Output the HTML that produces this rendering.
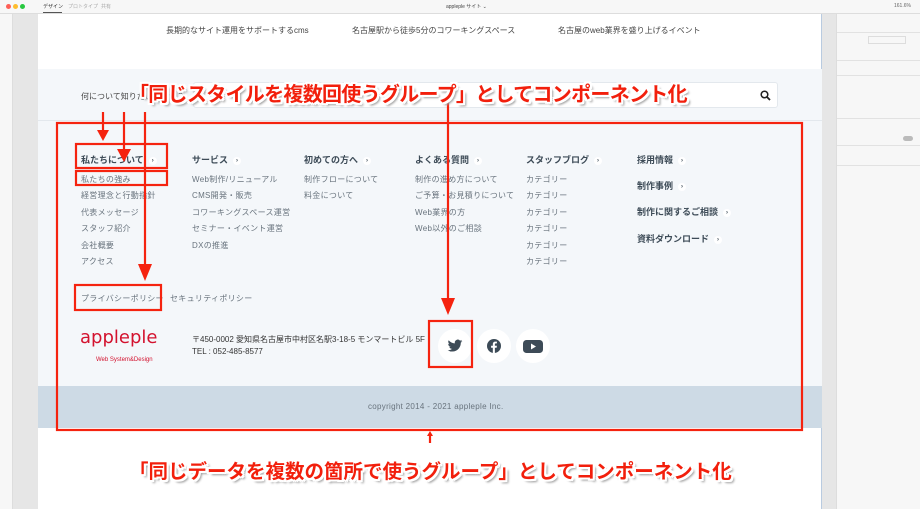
<!DOCTYPE html>
<html><head><meta charset="utf-8">
<style>
*{margin:0;padding:0;box-sizing:border-box}
body{width:920px;height:509px;overflow:hidden;background:#e6e6e6;font-family:"Liberation Sans","Noto Sans CJK JP",sans-serif;position:relative;color:#3d4b57}
.a{position:absolute;white-space:nowrap}
.top{left:0;top:0;width:920px;height:14px;background:#f7f7f7;border-bottom:1px solid #ddd}
.left{left:0;top:14px;width:13px;height:495px;background:#f7f7f7;border-right:1px solid #ddd}
.right{left:836px;top:14px;width:84px;height:495px;background:#f7f7f7;border-left:1px solid #ddd}
.art{left:38px;top:14px;width:784px;height:495px;background:#fff;border-right:1px solid #b9cbe0}
.h{font-size:9px;font-weight:bold;color:#3d4b57}
.h i{display:inline-block;width:8px;height:8px;border-radius:50%;background:#fff;font-style:normal;font-size:6px;text-align:center;line-height:8px;margin-left:5px;vertical-align:1px}
.it{font-size:8px;color:#68737d;line-height:16.4px;letter-spacing:.3px}
.t{font-size:7px;color:#444}
.c{width:34px;height:34px;border-radius:50%;background:#fff;top:329px}
.ann{font-weight:bold;color:#f21f0c;text-shadow:2px 2px 0 #fff,-2px -2px 0 #fff,2px -2px 0 #fff,-2px 2px 0 #fff,0 2px 0 #fff,2px 0 0 #fff,0 -2px 0 #fff,-2px 0 0 #fff,3px 3px 2px #999}
.sep{position:absolute;left:837px;width:83px;height:1px;background:#e2e2e2}
</style></head><body>
<div class="a top"></div>
<div class="a" style="left:6px;top:4px;width:5px;height:5px;border-radius:50%;background:#fe5f57"></div>
<div class="a" style="left:13px;top:4px;width:5px;height:5px;border-radius:50%;background:#febc2e"></div>
<div class="a" style="left:20px;top:4px;width:5px;height:5px;border-radius:50%;background:#28c840"></div>
<div class="a t" style="left:43px;top:3px;font-size:5px;color:#333">デザイン</div>
<div class="a" style="left:43px;top:12px;width:19px;height:1px;background:#555"></div>
<div class="a t" style="left:68px;top:3px;font-size:5px;color:#aaa">プロトタイプ</div>
<div class="a t" style="left:101px;top:3px;font-size:5px;color:#aaa">共有</div>
<div class="a t" style="left:446px;top:3px;font-size:5px;color:#444">appleple サイト ⌄</div>
<div class="a t" style="left:894px;top:3px;font-size:5px;color:#666">161.6%</div>
<div class="a left"></div>
<div class="a right"></div>
<div class="sep" style="top:32px"></div><div class="sep" style="top:60px"></div><div class="sep" style="top:75px"></div><div class="sep" style="top:118px"></div><div class="sep" style="top:145px"></div><div class="sep" style="top:165px"></div>
<div class="a" style="left:868px;top:36px;width:38px;height:8px;border:1px solid #ddd"></div>
<div class="a" style="left:903px;top:136px;width:10px;height:5px;border-radius:3px;background:#bbb"></div>
<div class="a art"></div>
<div class="a t" style="left:166px;top:25px;font-size:8px">長期的なサイト運用をサポートするcms</div>
<div class="a t" style="left:352px;top:25px;font-size:8px">名古屋駅から徒歩5分のコワーキングスペース</div>
<div class="a t" style="left:558px;top:25px;font-size:8px">名古屋のweb業界を盛り上げるイベント</div>
<div class="a" style="left:38px;top:69px;width:784px;height:317px;background:#f4f7fa"></div>
<div class="a t" style="left:81px;top:91px;font-size:8px">何について知りたいですか？</div>
<div class="a" style="left:193px;top:82px;width:585px;height:26px;background:#fff;border:1px solid #e3e8ed;border-radius:3px"></div>
<svg class="a" style="left:760px;top:90px" width="11" height="11" viewBox="0 0 11 11"><circle cx="4.5" cy="4.5" r="3.3" fill="none" stroke="#222" stroke-width="1.5"/><line x1="7" y1="7" x2="10" y2="10" stroke="#222" stroke-width="1.8"/></svg>
<div class="a" style="left:38px;top:120px;width:784px;height:1px;background:#e3e8ed"></div>

<div class="a h" style="left:81px;top:153px">私たちについて<i>›</i></div>
<div class="a it" style="left:81px;top:172px">私たちの強み<br>経営理念と行動指針<br>代表メッセージ<br>スタッフ紹介<br>会社概要<br>アクセス</div>
<div class="a h" style="left:192px;top:153px">サービス<i>›</i></div>
<div class="a it" style="left:192px;top:172px">Web制作/リニューアル<br>CMS開発・販売<br>コワーキングスペース運営<br>セミナー・イベント運営<br>DXの推進</div>
<div class="a h" style="left:304px;top:153px">初めての方へ<i>›</i></div>
<div class="a it" style="left:304px;top:172px">制作フローについて<br>料金について</div>
<div class="a h" style="left:415px;top:153px">よくある質問<i>›</i></div>
<div class="a it" style="left:415px;top:172px">制作の進め方について<br>ご予算・お見積りについて<br>Web業界の方<br>Web以外のご相談</div>
<div class="a h" style="left:526px;top:153px">スタッフブログ<i>›</i></div>
<div class="a it" style="left:526px;top:172px">カテゴリー<br>カテゴリー<br>カテゴリー<br>カテゴリー<br>カテゴリー<br>カテゴリー</div>
<div class="a h" style="left:637px;top:153px">採用情報<i>›</i></div>
<div class="a h" style="left:637px;top:179px">制作事例<i>›</i></div>
<div class="a h" style="left:637px;top:205px">制作に関するご相談<i>›</i></div>
<div class="a h" style="left:637px;top:232px">資料ダウンロード<i>›</i></div>
<div class="a it" style="left:81px;top:291px">プライバシーポリシー</div>
<div class="a it" style="left:170px;top:291px">セキュリティポリシー</div>

<div class="a" style="left:80px;top:327px;font-size:18px;color:#d3122e;letter-spacing:0;font-family:'DejaVu Sans',sans-serif">appleple</div>
<div class="a" style="left:96px;top:357px;font-size:6px;color:#d3122e">Web System&amp;Design</div>
<div class="a t" style="left:192px;top:334px;font-size:8px;color:#333">〒450-0002 愛知県名古屋市中村区名駅3-18-5 モンマートビル 5F</div>
<div class="a t" style="left:192px;top:347px;font-size:8px;color:#333">TEL : 052-485-8577</div>
<div class="a c" style="left:438px"></div>
<div class="a c" style="left:477px"></div>
<div class="a c" style="left:516px"></div>
<svg class="a" style="left:447px;top:338px" width="16" height="16" viewBox="0 0 24 24"><path fill="#3d4b57" d="M23 4.6a9 9 0 0 1-2.6.7 4.6 4.6 0 0 0 2-2.5 9 9 0 0 1-2.9 1.1 4.5 4.5 0 0 0-7.7 4.1A12.8 12.8 0 0 1 2.5 3.3a4.5 4.5 0 0 0 1.4 6 4.5 4.5 0 0 1-2-.6v.1a4.5 4.5 0 0 0 3.6 4.4 4.5 4.5 0 0 1-2 .1 4.5 4.5 0 0 0 4.2 3.1A9 9 0 0 1 1 18.3a12.8 12.8 0 0 0 6.9 2c8.3 0 12.8-6.9 12.8-12.8v-.6A9 9 0 0 0 23 4.6z"/></svg>
<svg class="a" style="left:487px;top:339px" width="14" height="14" viewBox="0 0 24 24"><circle cx="12" cy="12" r="12" fill="#3d4b57"/><path fill="#fff" d="M13.5 24v-9h3l.5-3.5h-3.5V9.3c0-1 .3-1.7 1.8-1.7H17V4.5c-.3 0-1.4-.1-2.6-.1-2.6 0-4.4 1.6-4.4 4.5v2.6H7V15h3v9z"/></svg>
<svg class="a" style="left:523px;top:340px" width="20" height="13" viewBox="0 0 20 13"><rect width="20" height="13" rx="3.5" fill="#3d4b57"/><path d="M8 3.5v6l5-3z" fill="#fff"/></svg>

<div class="a" style="left:38px;top:386px;width:784px;height:42px;background:#cddae5"></div>
<div class="a it" style="left:368px;top:399px">copyright 2014 - 2021 appleple Inc.</div>

<svg class="a" style="left:0;top:0" width="920" height="509">
<g fill="none" stroke="#f5230f" stroke-width="2.2">
<rect x="57" y="123" width="745" height="307"/>
<rect x="76" y="144" width="91" height="24"/>
<rect x="76" y="171" width="91" height="14"/>
<rect x="75" y="285" width="86" height="25"/>
<rect x="429" y="321" width="43" height="46"/>
<line x1="103" y1="112" x2="103" y2="132"/>
<line x1="124" y1="112" x2="124" y2="152"/>
<line x1="145" y1="112" x2="145" y2="268"/>
<line x1="448" y1="100" x2="448" y2="302"/>
<line x1="430" y1="443" x2="430" y2="436"/>
</g>
<g fill="#f5230f">
<polygon points="97,130 109,130 103,141"/>
<polygon points="117,149 131,149 124,162"/>
<polygon points="138,264 152,264 145,281"/>
<polygon points="441,298 455,298 448,315"/>
<polygon points="427,436 433,436 430,431"/>
</g>
</svg>
<div class="a ann" style="left:129px;top:78px;font-size:20px;letter-spacing:-.7px">「同じスタイルを複数回使うグループ」としてコンポーネント化</div>
<div class="a ann" style="left:129px;top:455px;font-size:19.5px;letter-spacing:0">「同じデータを複数の箇所で使うグループ」としてコンポーネント化</div>
</body></html>
